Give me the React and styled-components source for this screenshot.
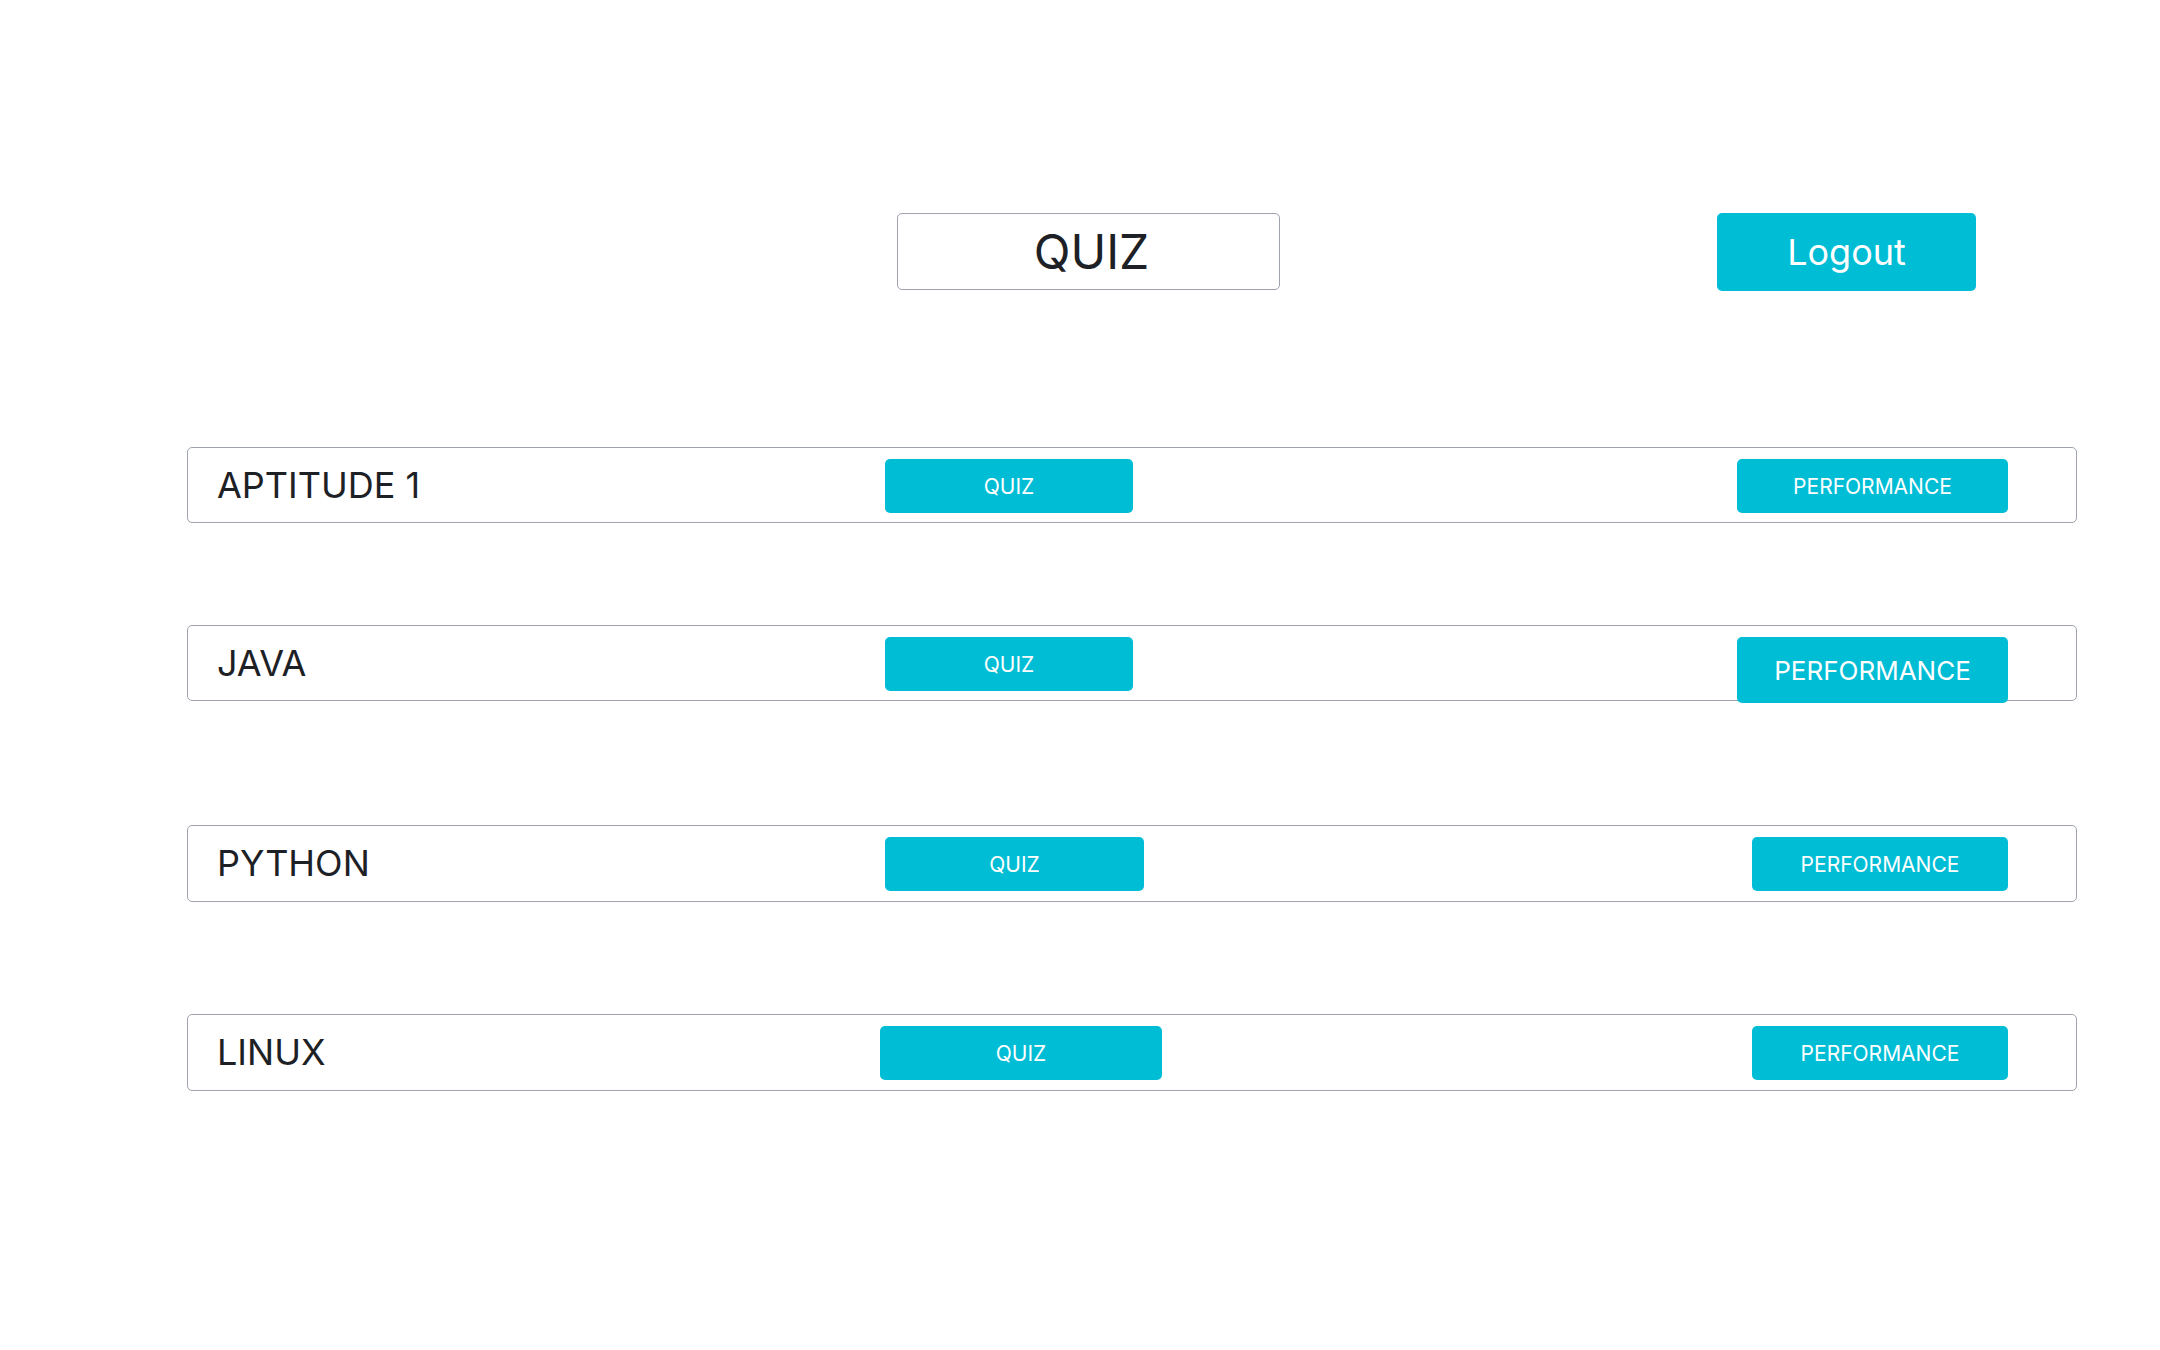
import React from "react";
import styled, { createGlobalStyle } from "styled-components";

const GlobalStyle = createGlobalStyle`
  html, body {
    margin: 0;
    padding: 0;
    background: #ffffff;
  }
  body {
    font-family: Inter, "Noto Sans", "Liberation Sans", sans-serif;
    color: #212529;
  }
  * { box-sizing: border-box; }
`;

const Page = styled.div`
  width: 2160px;
  min-height: 1350px;
  padding-top: 213px;
`;

const Header = styled.header`
  display: flex;
  align-items: flex-start;
  padding-left: 897px;
  gap: 437px;
`;

const TitleBox = styled.h1`
  margin: 0;
  width: 383px;
  height: 77px;
  border: 1px solid #9ea3ad;
  border-radius: 5px;
  display: flex;
  align-items: center;
  justify-content: center;
  font-size: 48px;
  font-weight: 400;
  color: #1d2125;
  padding-left: 6px;
`;

const Button = styled.button`
  border: none;
  background: #00bdd6;
  color: #ffffff;
  font-family: Inter, "Noto Sans", "Liberation Sans", sans-serif;
  font-weight: 400;
  border-radius: 5px;
  display: flex;
  align-items: center;
  justify-content: center;
  cursor: pointer;
  padding: 0;
  flex-shrink: 0;
`;

const LogoutButton = styled(Button)`
  width: 259px;
  height: 78px;
  font-size: 36px;
`;

const List = styled.main`
  margin-left: 187px;
  width: 1890px;
  margin-top: 156px;
  display: flex;
  flex-direction: column;
`;

const Row = styled.section`
  display: flex;
  align-items: flex-start;
  height: ${(p) => p.$h}px;
  margin-top: ${(p) => p.$space}px;
  padding: 11px 68px 0 29px;
  border: 1px solid #9ea3ad;
  border-radius: 5px;
`;

const Label = styled.h2`
  margin: 0;
  flex: 0 0 668px;
  align-self: center;
  margin-top: -12px;
  font-size: 36px;
  font-weight: 400;
  color: #1d2125;
`;

const QuizButton = styled(Button)`
  width: ${(p) => p.$w}px;
  height: 54px;
  margin-left: ${(p) => p.$shift}px;
  font-size: 21px;
`;

const PerfButton = styled(Button)`
  margin-left: auto;
  width: ${(p) => p.$w}px;
  height: ${(p) => (p.$big ? 66 : 54)}px;
  font-size: ${(p) => (p.$big ? 26 : 21)}px;
`;

const subjects = [
  { name: "APTITUDE 1", space: 0, h: 76, quizW: 248, shift: 0, perfW: 271, big: false },
  { name: "JAVA", space: 102, h: 76, quizW: 248, shift: 0, perfW: 271, big: true },
  { name: "PYTHON", space: 124, h: 77, quizW: 259, shift: 0, perfW: 256, big: false },
  { name: "LINUX", space: 112, h: 77, quizW: 282, shift: -5, perfW: 256, big: false },
];

export default function App() {
  return (
    <>
      <GlobalStyle />
      <Page>
        <Header>
          <TitleBox>QUIZ</TitleBox>
          <LogoutButton>Logout</LogoutButton>
        </Header>
        <List>
          {subjects.map((s) => (
            <Row key={s.name} $space={s.space} $h={s.h}>
              <Label>{s.name}</Label>
              <QuizButton $w={s.quizW} $shift={s.shift}>
                QUIZ
              </QuizButton>
              <PerfButton $w={s.perfW} $big={s.big}>
                PERFORMANCE
              </PerfButton>
            </Row>
          ))}
        </List>
      </Page>
    </>
  );
}
